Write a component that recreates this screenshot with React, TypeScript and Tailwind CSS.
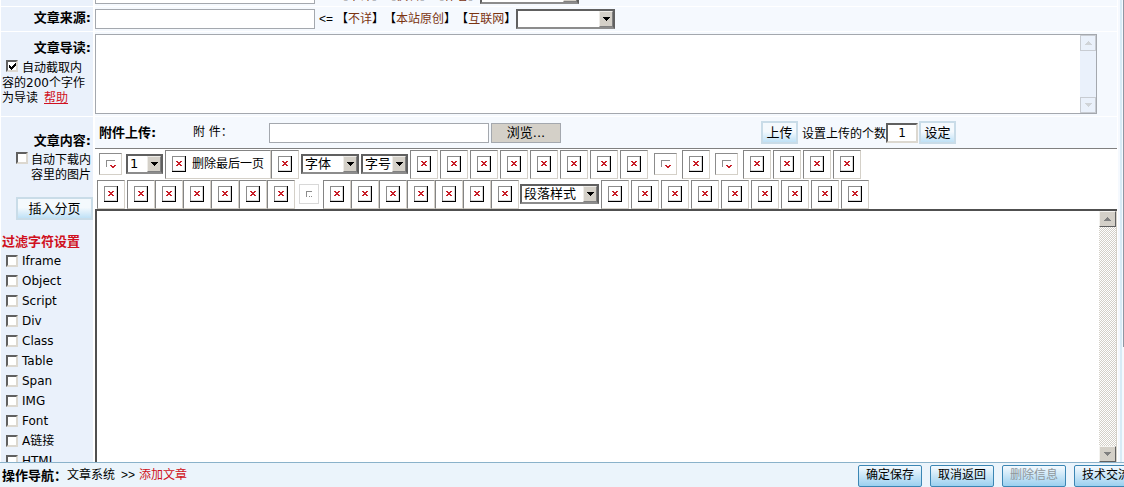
import { useState } from "react";
import type { ReactNode } from "react";

const FILTERS = ["Iframe", "Object", "Script", "Div", "Class", "Table", "Span", "IMG", "Font", "A链接", "HTML"];

function Arrow({ className }: { className: string }) {
  return (
    <svg viewBox="0 0 7 4" className={className} shapeRendering="crispEdges" aria-hidden="true">
      <path d="M0 0h7v1h-1v1h-1v1h-1v1h-1v-1h-1v-1h-1v-1h-1z" fill="currentColor" />
    </svg>
  );
}

// Sunken select with its own raised arrow button
function Select({ label, options, className }: { label: string; options: string[]; className: string }) {
  return (
    <span className={`relative inline-block h-5 shrink-0 ${className}`}>
      <select
        aria-label={label}
        className="block h-5 w-full appearance-none border-2 border-t-[#606060] border-l-[#606060] border-r-[#606060] border-b-[#8c8c8c] bg-white pl-0.5 text-[13px] leading-4"
      >
        {options.map((o) => (
          <option key={o}>{o}</option>
        ))}
      </select>
      <span className="pointer-events-none absolute top-0.5 right-0.5 bottom-0.5 flex w-[14px] items-center justify-center border border-t-[#eeece8] border-l-[#eeece8] border-r-[#808080] border-b-[#808080] bg-[#d4d0c8]">
        <Arrow className="h-1 w-[7px] shrink-0" />
      </span>
    </span>
  );
}

function Checkbox({ id, checked = false }: { id: string; checked?: boolean }) {
  const [on, setOn] = useState(checked);
  return (
    <span className="relative inline-block h-3 w-3 shrink-0">
      <input
        id={id}
        type="checkbox"
        checked={on}
        onChange={(e) => setOn(e.target.checked)}
        className="block h-3 w-3 appearance-none border-2 border-t-[#606060] border-l-[#606060] border-r-[#dcd8d0] border-b-[#dcd8d0] bg-white"
      />
      {on && (
        <svg viewBox="0 0 12 12" className="pointer-events-none absolute inset-0 h-3 w-3" shapeRendering="crispEdges">
          <path d="M3 5h1v1h1v1h1v-1h1v-1h1v-1h1v-1h1v3h-1v1h-1v1h-1v1h-1v1h-1v-1h-1v-1h-1z" />
        </svg>
      )}
    </span>
  );
}

function MissingImage() {
  return (
    <svg viewBox="0 0 14 16" className="h-4 w-[14px] shrink-0" shapeRendering="crispEdges" aria-hidden="true">
      <path d="M0 0h14v16h-14z" fill="#fff" />
      <path d="M0 0h13v1h-12v14h-1z" fill="#8c8c8c" />
      <path d="M12 1h1v14h-12v-1h11z" fill="#d8d8d8" />
      <path d="M13 0h1v16h-14v-1h13z" fill="#000" />
      <path d="M4 5h2v1h2v-1h2v1h-1v1h-1v1h1v1h1v1h-2v-1h-2v1h-2v-1h1v-1h1v-1h-1v-1h-1z" fill="#c81e28" />
    </svg>
  );
}

function Tool({ name, children }: { name: string; children?: ReactNode }) {
  return (
    <button
      type="button"
      aria-label={name}
      className="flex h-[29px] min-w-7 shrink-0 items-center justify-center border border-t-[#848484] border-l-[#848484] border-r-[#d4d0c8] border-b-[#d4d0c8] bg-white px-1.5"
    >
      <MissingImage />
      {children}
    </button>
  );
}

function Tools({ count, name, gap = "gap-0.5" }: { count: number; name: string; gap?: string }) {
  return (
    <div className={`flex ${gap}`}>
      {Array.from({ length: count }, (_, i) => (
        <Tool key={i} name={`${name} ${i + 1}`} />
      ))}
    </div>
  );
}

// Small button whose picture is cropped to a corner
function CroppedTool({ name, dim = false }: { name: string; dim?: boolean }) {
  return (
    <button
      type="button"
      aria-label={name}
      className={
        dim
          ? "flex h-5 w-5 shrink-0 items-center justify-center border border-[#d8d8d8] bg-white"
          : "flex h-[22px] w-[23px] shrink-0 items-center justify-center border border-t-[#8c8c8c] border-l-[#8c8c8c] border-r-[#d4d0c8] border-b-[#d4d0c8] bg-white"
      }
    >
      <svg viewBox="0 0 10 8" className="h-2 w-[10px]" shapeRendering="crispEdges" aria-hidden="true">
        {dim ? (
          <path d="M2 1h6v1h-5v5h-1zM5 6h1v1h-1zM7 6h1v1h-1z" fill="#8c8c8c" />
        ) : (
          <>
            <path d="M0 0h9v1h-8v6h-1z" fill="#8c8c8c" />
            <path d="M4 5h2v1h2v-1h2v1h-1v1h-1v1h-2v-1h-1v-1h-1z" fill="#c81e28" />
          </>
        )}
      </svg>
    </button>
  );
}

function BlueButton({ children, className }: { children: ReactNode; className: string }) {
  return (
    <button
      type="button"
      className={`h-[23px] shrink-0 border-2 border-[#c9dce8] bg-linear-to-b from-[#f4f9fd] from-45% to-[#bfe1f6] text-[13px] leading-4 ${className}`}
    >
      {children}
    </button>
  );
}

function Row({ label, children, className = "" }: { label: ReactNode; children: ReactNode; className?: string }) {
  return (
    <div className={`flex gap-0.5 ${className}`}>
      <div className="w-[92px] shrink-0 overflow-hidden bg-[#eaf1fb]">{label}</div>
      <div className="min-w-0 flex-1 bg-[#f5f9fe]">{children}</div>
    </div>
  );
}

function Suggestions({ names }: { names: string[] }) {
  return (
    <span className="flex pl-1 whitespace-nowrap">
      <span className="pr-[3px] font-['Liberation_Sans',sans-serif]">&lt;=</span>
      {names.map((n) => (
        <span key={n} className="flex">
          【
          <a href="#" className="text-[#7b3411]">
            {n}
          </a>
          】
        </span>
      ))}
    </span>
  );
}

const textBox = "h-5 w-[220px] shrink-0 border border-[#a4a8ae] bg-white px-1";
const footerButton =
  "h-[22px] w-16 shrink-0 rounded-xs border border-[#3b86b4] bg-linear-to-b from-[#f4fafe] to-[#9bd0ef] whitespace-nowrap disabled:text-[#8f979c]";

export default function App() {
  return (
    <div className="flex h-screen flex-col overflow-hidden bg-white font-['DejaVu_Sans','Noto_Sans_CJK_SC',sans-serif] text-[12px] leading-[15px] text-black">
      <div className="flex min-h-0 flex-1 bg-[#f5f9fe]">
        <main className="flex min-w-0 flex-1 flex-col gap-px bg-white pl-px">
          {/* tail of the author row, scrolled out at the top */}
          <Row label={null} className="h-1.5 shrink-0 overflow-hidden">
            <div className="flex h-1.5 items-end pb-0.5">
              <input aria-label="文章作者" className={textBox} />
              <Suggestions names={["不详", "佚名", "作者"]} />
              <Select label="作者" options={[""]} className="w-[99px]" />
            </div>
          </Row>

          <Row
            className="h-6 shrink-0"
            label={
              <label htmlFor="source" className="block pt-[3px] pr-0.5 text-right text-[13px] font-bold">
                文章来源:
              </label>
            }
          >
            <div className="flex h-6 items-center">
              <input id="source" className={textBox} />
              <Suggestions names={["不详", "本站原创", "互联网"]} />
              <Select label="来源" options={[""]} className="w-[99px]" />
            </div>
          </Row>

          <Row
            className="h-[84px] shrink-0"
            label={
              <>
                <label htmlFor="summary" className="block pt-2 pr-0.5 text-right text-[13px] font-bold">
                  文章导读:
                </label>
                <div className="pt-[5px] pl-px">
                  <span className="px-1">
                    <Checkbox id="auto-summary" checked />
                  </span>
                  <label htmlFor="auto-summary">
                    自动截取内
                    <br />
                    容的200个字作
                    <br />
                    为导读
                  </label>
                  <a href="#" className="ml-1.5 text-[#d01020] underline">
                    帮助
                  </a>
                </div>
              </>
            }
          >
            <div className="pt-0.5 pr-5">
              <div className="flex h-20 border border-[#a4a8ae] bg-white">
                <textarea id="summary" className="min-w-0 flex-1 resize-none overflow-hidden p-1" />
                <div className="flex w-4 flex-col justify-between bg-[#eaf1fb] text-[#d0d4d8]">
                  <span className="flex h-4 items-center justify-center border border-[#c8ccd2]">
                    <Arrow className="h-1 w-[7px] rotate-180" />
                  </span>
                  <span className="flex h-4 items-center justify-center border border-[#c8ccd2]">
                    <Arrow className="h-1 w-[7px]" />
                  </span>
                </div>
              </div>
            </div>
          </Row>

          <Row
            className="min-h-0 flex-1 overflow-hidden"
            label={
              <>
                <label htmlFor="content" className="block pt-4 pr-0.5 text-right text-[13px] font-bold">
                  文章内容:
                </label>
                <div className="pt-1 pr-0.5 text-right">
                  <span className="pr-[3px]">
                    <Checkbox id="auto-download" />
                  </span>
                  <label htmlFor="auto-download">
                    自动下载内
                    <br />
                    容里的图片
                  </label>
                </div>
                <div className="flex justify-end pt-[14px]">
                  <BlueButton className="w-[77px]">插入分页</BlueButton>
                </div>
                <div className="pt-[14px] pl-px text-[13px] font-bold text-[#d01020]">过滤字符设置</div>
                <ul className="pt-0.5 pl-[5px]">
                  {FILTERS.map((name) => (
                    <li key={name} className="flex h-5 items-center gap-1">
                      <Checkbox id={`filter-${name}`} />
                      <label htmlFor={`filter-${name}`}>{name}</label>
                    </li>
                  ))}
                </ul>
              </>
            }
          >
            <div className="flex h-full flex-col">
              <div className="flex h-[31px] shrink-0 items-center pl-1">
                <span className="w-[94px] shrink-0 text-[13px] font-bold">附件上传:</span>
                <label htmlFor="attachment" className="w-[76px] shrink-0">
                  附 件：
                </label>
                <input id="attachment" className={textBox} />
                <button
                  type="button"
                  className="ml-0.5 h-5 w-[70px] shrink-0 border border-[#a4a8ae] bg-[#d4d0c8] text-[13px] leading-4"
                >
                  浏览...
                </button>
                <div className="ml-[200px] flex items-center">
                  <BlueButton className="w-[37px]">上传</BlueButton>
                  <label htmlFor="upload-count" className="pt-1 pl-1 whitespace-nowrap">
                    设置上传的个数
                  </label>
                  <input
                    id="upload-count"
                    defaultValue="1"
                    className="mr-px h-5 w-8 border-2 border-t-[#606060] border-l-[#606060] border-r-[#dcd8d0] border-b-[#dcd8d0] bg-white text-center"
                  />
                  <BlueButton className="w-[37px]">设定</BlueButton>
                </div>
              </div>

              <div className="shrink-0 overflow-hidden border-t border-[#808080] bg-white">
                <div className="flex h-[30px] items-center pl-1">
                  <CroppedTool name="表格" />
                  <div className="flex items-center gap-0.5 pl-1">
                    <Select label="页" options={["1"]} className="w-[37px]" />
                    <Tool name="删除最后一页">
                      <span className="pl-1.5 whitespace-nowrap">删除最后一页</span>
                    </Tool>
                  </div>
                  <div className="flex items-center gap-0.5">
                    <Tool name="分页" />
                    <Select label="字体" options={["字体"]} className="w-[58px]" />
                    <Select label="字号" options={["字号"]} className="w-[47px]" />
                  </div>
                  <div className="flex items-center gap-1 pl-0.5">
                    <Tools count={8} name="格式" />
                    <div className="flex items-center gap-[5px] pl-0.5">
                      <CroppedTool name="文字颜色" />
                      <Tool name="背景" />
                      <CroppedTool name="背景颜色" />
                      <Tools count={4} name="对齐" />
                    </div>
                  </div>
                </div>
                <div className="flex h-[30px] items-center pl-0.5">
                  <Tools count={2} name="编辑" />
                  <Tools count={5} name="插入" gap="gap-0" />
                  <div className="flex items-center gap-1 pl-1">
                    <CroppedTool name="符号" dim />
                    <Tools count={7} name="对象" gap="gap-0" />
                  </div>
                  <div className="flex items-center gap-0.5 pl-px">
                    <Select label="段落样式" options={["段落样式"]} className="w-[79px]" />
                    <Tools count={9} name="段落" />
                  </div>
                </div>
              </div>

              <div className="flex min-h-0 flex-1 border-t-2 border-l-2 border-[#505050] bg-white">
                <textarea id="content" className="min-w-0 flex-1 resize-none overflow-hidden p-1" />
                <div className="flex w-[18px] flex-col justify-between border-r border-[#d4d0c8] bg-[repeating-conic-gradient(#d4d0c8_0_25%,#ffffff_0_50%)] bg-[length:2px_2px] text-[#808080]">
                  <span className="flex h-4 items-center justify-center border border-t-[#f4f3f0] border-l-[#f4f3f0] border-r-[#606060] border-b-[#606060] bg-[#d4d0c8]">
                    <Arrow className="h-1 w-[7px] rotate-180" />
                  </span>
                  <span className="flex h-4 items-center justify-center border border-t-[#f4f3f0] border-l-[#f4f3f0] border-r-[#606060] border-b-[#606060] bg-[#d4d0c8]">
                    <Arrow className="h-1 w-[7px]" />
                  </span>
                </div>
              </div>
            </div>
          </Row>
        </main>
        <div className="flex w-[7px] shrink-0 justify-end gap-px border-l border-white">
          <span className="w-0.5 bg-[#d8ebf6]" />
          <span className="h-3/4 w-px bg-[#8c98a4]" />
        </div>
      </div>

      <footer className="flex h-[25px] shrink-0 items-center overflow-hidden border-t border-[#8ab2ca] bg-[#ebf4fb] pl-0.5">
        <nav className="flex whitespace-nowrap">
          <b className="text-[13px]">操作导航：</b>
          <span className="pr-1.5">文章系统</span>
          <span className="pr-1 font-['Liberation_Sans',sans-serif]">&gt;&gt;</span>
          <a href="#" className="text-[#d01020]">
            添加文章
          </a>
        </nav>
        <div className="-mr-[14px] ml-auto flex gap-2 pt-px">
          <button type="submit" className={footerButton}>确定保存</button>
          <button type="button" className={footerButton}>取消返回</button>
          <button type="button" disabled className={footerButton}>删除信息</button>
          <button type="button" className={footerButton}>技术交流</button>
        </div>
      </footer>
    </div>
  );
}
